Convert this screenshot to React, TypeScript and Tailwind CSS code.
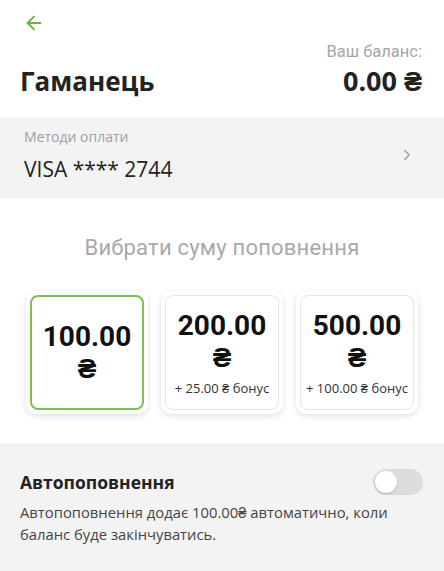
import { ArrowLeft, ChevronRight } from "lucide-react";

const amounts = [
  { value: "100.00", bonus: "", selected: true },
  { value: "200.00", bonus: "+ 25.00 ₴ бонус", selected: false },
  { value: "500.00", bonus: "+ 100.00 ₴ бонус", selected: false },
];

export default function App() {
  return (
    <div className="w-[444px] h-[571px] overflow-hidden bg-white font-['Open_Sans',sans-serif] text-[#222]">
      {/* header */}
      <div className="pl-5 pr-[22px] pt-[12px] h-[117px]">
        <ArrowLeft size={22} strokeWidth={2} className="text-[#6cb33f] ml-[3px]" />
        <div className="flex items-end justify-between mt-[8px]">
          <h1 className="text-[26px] font-bold leading-none pb-[2px]">Гаманець</h1>
          <div className="flex flex-col items-end">
            <span className="text-[16.5px] text-[#a6a6a6] font-['Roboto',sans-serif] leading-[20px]">Ваш баланс:</span>
            <span className="text-[27px] font-bold leading-[30px] mt-[4px]">0.00 ₴</span>
          </div>
        </div>
      </div>

      {/* payment methods */}
      <div className="bg-[#f3f3f3] h-[81px] pl-6 pr-7 flex items-center justify-between">
        <div className="flex flex-col">
          <span className="text-[14px] text-[#a0a0a0] leading-[18px] -mt-[6px]">Методи оплати</span>
          <span className="text-[21px] text-[#222] leading-[26px] mt-[10px]">VISA **** 2744</span>
        </div>
        <ChevronRight size={18} strokeWidth={1.6} className="text-[#9a9a9a] -mt-[6px]" />
      </div>

      {/* amount */}
      <div className="h-[245px] pt-[33px]">
        <p className="text-center text-[22px] text-[#a9a9a9] font-['Roboto',sans-serif] tracking-[0.2px]">Вибрати суму поповнення</p>
        <div className="flex justify-center gap-[13px] mt-[27px]">
          {amounts.map((a) => (
            <div
              key={a.value}
              className="w-[122px] h-[123px] rounded-[10px] bg-white p-[4px] shadow-[0_2px_6px_rgba(0,0,0,0.12)]"
            >
              <div
                className={
                  a.selected
                    ? "h-full rounded-[8px] border-2 border-[#7cc052] flex flex-col items-center justify-center font-['Roboto',sans-serif]"
                    : "h-full rounded-[8px] border border-[#e6e6e6] flex flex-col items-center justify-center font-['Roboto',sans-serif]"
                }
              >
                <span className="text-[28px] font-bold leading-[32px] text-[#111]">{a.value}</span>
                <span className="text-[28px] font-bold leading-[32px] text-[#111]">₴</span>
                {a.bonus && (
                  <span className="text-[13px] text-[#333] leading-[16px] mt-[6px] font-['Open_Sans',sans-serif]">{a.bonus}</span>
                )}
              </div>
            </div>
          ))}
        </div>
      </div>

      {/* auto top-up */}
      <div className="bg-[#f3f3f3] h-[128px] px-5 pt-[26px]">
        <div className="flex items-center justify-between">
          <span className="text-[17.5px] font-bold text-[#222]">Автопоповнення</span>
          <div className="w-[50px] h-[26px] rounded-full bg-[#dcdcdc] p-[2px] mr-[1px]">
            <div className="w-[22px] h-[22px] rounded-full bg-white shadow-[0_1px_2px_rgba(0,0,0,0.2)]" />
          </div>
        </div>
        <p className="text-[14.8px] text-[#444] leading-[22px] mt-[6px]">
          Автопоповнення додає 100.00₴ автоматично, коли баланс буде закінчуватись.
        </p>
      </div>
    </div>
  );
}
